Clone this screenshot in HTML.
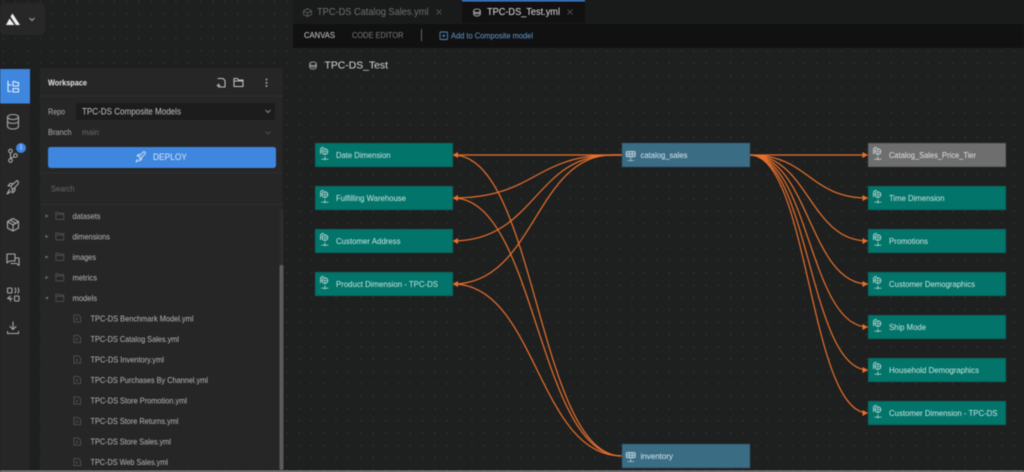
<!DOCTYPE html>
<html><head><meta charset="utf-8"><style>
html,body{margin:0;padding:0;background:#1e1f1f;width:1024px;height:472px;overflow:hidden}
svg{display:block;filter:blur(.5px)}
text{font-family:"Liberation Sans",sans-serif;dominant-baseline:central}
.n{font-size:8.6px;fill:#cfe5e1}
.f{font-size:8.3px;fill:#b8b8b8}
.i{fill:none;stroke:#c4c4c4;stroke-width:1.1;stroke-linecap:round;stroke-linejoin:round}
.e{fill:none;stroke:#e8702c;stroke-width:1.2}
</style></head><body>
<svg width="1024" height="472" viewBox="0 0 1024 472" xmlns="http://www.w3.org/2000/svg">
<defs>
<pattern id="d" x="2.7" y="1" width="12.33" height="12.33" patternUnits="userSpaceOnUse"><rect x="0" y="0" width="1.2" height="1.2" fill="#3a3c3c"/></pattern>
<symbol id="nd" viewBox="0 0 16 20" overflow="visible"><g fill="none" stroke="#d5e5e2" stroke-width="1"><path d="M3 10V4.5C3 3 4.5 2 7 1.5"/><circle cx="8.5" cy="7" r="3.6"/><path d="M5 7H12M8.5 3.5V10.5" stroke-width=".7"/><path d="M8.500 13V18M4 16.500H13" stroke-width=".8"/></g></symbol>
<symbol id="tb" viewBox="0 0 16 20" overflow="visible"><g fill="none" stroke="#d5e5ea" stroke-width="1"><rect x="1" y="2" width="12" height="7" rx="1.500" fill="#8fb0bd" fill-opacity=".4"/><path d="M5 2V9M9 2V9M1 5.500H13" stroke-width=".8"/><path d="M7 10V15M2.500 14H11.500" stroke-width=".8"/></g></symbol>
<symbol id="fd" viewBox="0 0 12 10" overflow="visible"><path d="M1 2.500V9H10.500V1.500H5L4 .5H1Z M1 3H10.500" fill="none" stroke="#565656" stroke-width=".9"/></symbol>
<symbol id="fl" viewBox="0 0 10 10" overflow="visible"><path d="M1 1H6L8.500 3.500V9H1Z M3.500 4L5 5.500 3.500 7" fill="none" stroke="#565656" stroke-width=".9"/></symbol>
<symbol id="cb" viewBox="0 0 12 10" overflow="visible"><g fill="none" stroke-width="1"><ellipse cx="6" cy="3" rx="4" ry="2.200"/><path d="M2 3V7C2 8.200 4 9.200 6 9.200S10 8.200 10 7V3M2 5.500C3 7 9 7 10 5.500"/></g></symbol>
</defs>
<rect width="1024" height="472" fill="#1e1f1f"/>
<rect width="1024" height="472" fill="url(#d)"/>

<!-- logo box -->
<rect x="0" y="3" width="45" height="32" rx="5" fill="#272727"/>
<path d="M12.500 13.500L20 25H16L10.500 16.500Z" fill="#f0f0f0"/>
<path d="M9.500 18.500L14.500 25H6Z" fill="#f0f0f0"/>
<path d="M29.500 18L32 20.500L34.500 18" fill="none" stroke="#aaa" stroke-width="1"/>

<!-- left rail -->
<rect x="0" y="69" width="30" height="401" fill="#262626"/>
<rect x="0" y="69" width="30" height="34.500" fill="#3f86de"/>
<path class="i" style="stroke:#e4eefa" d="M8 81V91.500H11M8 85H11"/>
<path class="i" style="stroke:#e4eefa" d="M13 81.500H15L16 82.500H18.500V86H13ZM13 88.500H18.500V92H13Z"/>
<g class="i" style="stroke:#a8a8a8"><ellipse cx="13" cy="117" rx="5.500" ry="2.500"/><path d="M7.500 117V126C7.500 128 10 129 13 129S18.500 128 18.500 126V117M7.500 121.500C9 124 17 124 18.500 121.500"/></g>
<g class="i" style="stroke:#a8a8a8"><circle cx="10.500" cy="151" r="1.800"/><circle cx="10.500" cy="160.500" r="1.800"/><circle cx="15.500" cy="155.500" r="1.800"/><path d="M10.500 153V158.500M14 156.800L10.500 158.500"/></g>
<circle cx="21" cy="148" r="5" fill="#3f86de"/>
<text x="21" y="148" text-anchor="middle" style="font-size:6px;fill:#e8f0fb">1</text>
<g class="i" style="stroke:#a8a8a8"><path d="M11 186L17 180.500L18.500 182L18 184L12.500 190ZM11 186L8 186L10 183.500L13 183.500M12.500 190V193L15 190.500V188M9.500 189.500L7 194L11 191.500"/></g>
<g class="i" style="stroke:#a8a8a8"><path d="M13 218.500L18.500 221.500V228L13 231L7.500 228V221.500ZM7.500 221.500L13 225L18.500 221.500M13 225V231M10 220L16 223.500"/></g>
<g class="i" style="stroke:#a8a8a8"><path d="M7 254H15V261H9.500L7 263ZM15.500 258H19V265.500L16.500 263.500H11"/></g>
<g class="i" style="stroke:#a8a8a8"><rect x="7.500" y="288" width="4.500" height="5" rx="1"/><path d="M15 288C16 289.500 16 291.500 15 293M18 288C19 289.500 19 291.500 18 293M7.500 298.500H12M10.500 296L7.500 298.500L10.500 299V301"/><rect x="14.500" y="296" width="4.500" height="5" rx="1"/></g>
<g class="i" style="stroke:#a8a8a8"><path d="M13 322V329M10 326.500L13 329.500L16 326.500M7.500 331.500V333.500H18.500V331.500"/></g>

<!-- workspace panel -->
<rect x="40" y="68" width="243" height="402" rx="2" fill="#262626"/>
<rect x="40" y="95.500" width="243" height="1.200" fill="#2e2e2e"/>
<rect x="40" y="172.500" width="243" height="1.200" fill="#2e2e2e"/>
<rect x="40" y="204" width="243" height="1.200" fill="#2e2e2e"/>
<text x="48" y="82.500" textLength="39" lengthAdjust="spacingAndGlyphs" style="font-size:8.500px;font-weight:700;fill:#e6e6e6">Workspace</text>
<g class="i" style="stroke:#bdbdbd"><path d="M218 78.500H223L225 80.500V87H219M217 85.500H220M218.500 84V87"/></g>
<g class="i" style="stroke:#bdbdbd"><path d="M234 78.500H237.500L238.500 80H243V86.500H234Z M234 81H243"/></g>
<circle cx="266.500" cy="79.500" r=".9" fill="#bdbdbd"/><circle cx="266.500" cy="82.800" r=".9" fill="#bdbdbd"/><circle cx="266.500" cy="86" r=".9" fill="#bdbdbd"/>

<text x="48" y="111.500" textLength="17" lengthAdjust="spacingAndGlyphs" style="font-size:8.300px;fill:#b0b0b0">Repo</text>
<rect x="76" y="103" width="199" height="17" rx="2" fill="#1c1c1c"/>
<text x="82" y="111.500" textLength="99" lengthAdjust="spacingAndGlyphs" style="font-size:8.800px;fill:#c4c4c4">TPC-DS Composite Models</text>
<path d="M265.500 110L268 112.500L270.500 110" fill="none" stroke="#8a8a8a" stroke-width="1"/>
<text x="48" y="132" textLength="23.500" lengthAdjust="spacingAndGlyphs" style="font-size:8.300px;fill:#b0b0b0">Branch</text>
<text x="82" y="132" textLength="17" lengthAdjust="spacingAndGlyphs" style="font-size:8.300px;fill:#6a6a6a">main</text>
<path d="M265.500 131.500L268 134L270.500 131.500" fill="none" stroke="#4e4e4e" stroke-width="1"/>
<rect x="48" y="147" width="228" height="21" rx="2.500" fill="#3f86de"/>
<text x="153" y="157.500" textLength="34" lengthAdjust="spacingAndGlyphs" style="font-size:9.500px;fill:#d9e6f7">DEPLOY</text>
<g class="i" style="stroke:#d2e1f5;stroke-width:.9"><path d="M139 156L144 151.500L145.500 152.500L145 154L140 159ZM139 156L137 156L139 154M140 159V161L142 158.500M137.500 159.500L136 162L138.500 160.500"/></g>
<text x="51" y="188.500" textLength="23.500" lengthAdjust="spacingAndGlyphs" style="font-size:8.300px;fill:#686868">Search</text>

<!-- tree -->
<g fill="#6e6e6e">
<path d="M45.500 214.500L48.500 216L45.500 217.500Z"/><path d="M45.500 235L48.500 236.500L45.500 238Z"/><path d="M45.500 255.500L48.500 257L45.500 258.500Z"/><path d="M45.500 276L48.500 277.500L45.500 279Z"/><path d="M45.500 297L48.500 297L47 300Z"/>
</g>
<use href="#fd" x="55" y="211.500" width="10" height="9"/>
<use href="#fd" x="55" y="232" width="10" height="9"/>
<use href="#fd" x="55" y="252.500" width="10" height="9"/>
<use href="#fd" x="55" y="273" width="10" height="9"/>
<use href="#fd" x="55" y="293.500" width="10" height="9"/>
<text class="f" x="72.500" y="216" textLength="28" lengthAdjust="spacingAndGlyphs">datasets</text>
<text class="f" x="72.500" y="236.500" textLength="37.500" lengthAdjust="spacingAndGlyphs">dimensions</text>
<text class="f" x="72.500" y="257" textLength="23.500" lengthAdjust="spacingAndGlyphs">images</text>
<text class="f" x="72.500" y="277.500" textLength="24.500" lengthAdjust="spacingAndGlyphs">metrics</text>
<text class="f" x="72.500" y="298" textLength="24.500" lengthAdjust="spacingAndGlyphs">models</text>
<use href="#fl" x="73" y="314" width="9" height="9"/>
<use href="#fl" x="73" y="334.500" width="9" height="9"/>
<use href="#fl" x="73" y="355" width="9" height="9"/>
<use href="#fl" x="73" y="375.500" width="9" height="9"/>
<use href="#fl" x="73" y="396" width="9" height="9"/>
<use href="#fl" x="73" y="416.500" width="9" height="9"/>
<use href="#fl" x="73" y="437" width="9" height="9"/>
<use href="#fl" x="73" y="457.500" width="9" height="9"/>
<text class="f" x="90.500" y="318.500" textLength="103" lengthAdjust="spacingAndGlyphs">TPC-DS Benchmark Model.yml</text>
<text class="f" x="90.500" y="339" textLength="88.500" lengthAdjust="spacingAndGlyphs">TPC-DS Catalog Sales.yml</text>
<text class="f" x="90.500" y="359.500" textLength="73.500" lengthAdjust="spacingAndGlyphs">TPC-DS Inventory.yml</text>
<text class="f" x="90.500" y="380" textLength="117.500" lengthAdjust="spacingAndGlyphs">TPC-DS Purchases By Channel.yml</text>
<text class="f" x="90.500" y="400.500" textLength="96.500" lengthAdjust="spacingAndGlyphs">TPC-DS Store Promotion.yml</text>
<text class="f" x="90.500" y="421" textLength="88" lengthAdjust="spacingAndGlyphs">TPC-DS Store Returns.yml</text>
<text class="f" x="90.500" y="441.500" textLength="80.500" lengthAdjust="spacingAndGlyphs">TPC-DS Store Sales.yml</text>
<text class="f" x="90.500" y="462" textLength="77.500" lengthAdjust="spacingAndGlyphs">TPC-DS Web Sales.yml</text>
<rect x="279.500" y="209" width="4" height="261" rx="1.500" fill="#2c2c2c"/>
<rect x="279.500" y="265" width="4" height="205" rx="1.500" fill="#5a5a5a"/>

<!-- tabs and toolbar -->
<rect x="293" y="0" width="731" height="24" fill="#191a1a"/>
<rect x="462" y="1" width="123" height="22" fill="#111"/>
<rect x="462" y="0" width="123" height="1.500" fill="#3f86de"/>
<rect x="293" y="24" width="731" height="24" fill="#111"/>
<g class="i" style="stroke:#5e5e5e;stroke-width:.9"><path d="M307.500 8.500L311.500 11V14.500L307.500 16.500L303.500 14.500V11ZM303.500 11L307.500 13L311.500 11M307.500 13V16.500"/></g>
<text x="317" y="12" textLength="111.500" lengthAdjust="spacingAndGlyphs" style="font-size:10.500px;fill:#707070">TPC-DS Catalog Sales.yml</text>
<path d="M436.500 9.500L441.500 14.500M441.500 9.500L436.500 14.500" stroke="#4a4a4a" stroke-width="1"/>
<use href="#cb" x="472" y="8" width="10" height="9" stroke="#bbb"/>
<text x="487" y="12" textLength="73" lengthAdjust="spacingAndGlyphs" style="font-size:10.500px;fill:#e2e2e2">TPC-DS_Test.yml</text>
<path d="M567.500 9.500L572.500 14.500M572.500 9.500L567.500 14.500" stroke="#4a4a4a" stroke-width="1"/>
<text x="304" y="35.500" textLength="31" lengthAdjust="spacingAndGlyphs" style="font-size:8.200px;fill:#d4d4d4">CANVAS</text>
<text x="352" y="35.500" textLength="51.500" lengthAdjust="spacingAndGlyphs" style="font-size:8.200px;fill:#7c7c7c">CODE EDITOR</text>
<rect x="421" y="29" width="1" height="12" fill="#666"/>
<rect x="440" y="32" width="7.500" height="7.500" rx="1" fill="none" stroke="#4f86b8" stroke-width=".9"/>
<path d="M442.200 35.700H445.300M443.700 34.200V37.300" stroke="#4f86b8" stroke-width=".8"/>
<text x="451" y="35.500" textLength="82" lengthAdjust="spacingAndGlyphs" style="font-size:8.300px;fill:#659bd0">Add to Composite model</text>
<use href="#cb" x="308" y="61" width="10" height="9" stroke="#b0b0b0"/>
<text x="324.500" y="65.500" textLength="63.500" lengthAdjust="spacingAndGlyphs" style="font-size:10.500px;fill:#dadada">TPC-DS_Test</text>

<!-- edges -->
<g class="e">
<path d="M622 155H453"/>
<path d="M622 155H612C535 155 535 198 453 198"/>
<path d="M622 155H612C535 155 535 241 453 241"/>
<path d="M622 155H612C535 155 535 284 453 284"/>
<path d="M622 456C537 456 537 155 453 155"/>
<path d="M622 456C537 456 537 198 453 198"/>
<path d="M622 456C537 456 537 284 453 284"/>
<path d="M750 155H868"/>
<path d="M750 155C809 155 809 198 868 198"/>
<path d="M750 155C809 155 809 241 868 241"/>
<path d="M750 155C809 155 809 284 868 284"/>
<path d="M750 155C809 155 809 327 868 327"/>
<path d="M750 155C809 155 809 370 868 370"/>
<path d="M750 155C809 155 809 413 868 413"/>
</g>
<g fill="#e8702c">
<path d="M452.500 155L458 152V158Z"/><path d="M452.500 198L458 195V201Z"/><path d="M452.500 241L458 238V244Z"/><path d="M452.500 284L458 281V287Z"/>
<path d="M868 155L862.500 152V158Z"/><path d="M868 198L862.500 195V201Z"/><path d="M868 241L862.500 238V244Z"/><path d="M868 284L862.500 281V287Z"/><path d="M868 327L862.500 324V330Z"/><path d="M868 370L862.500 367V373Z"/><path d="M868 413L862.500 410V416Z"/>
</g>

<!-- nodes -->
<g fill="#02746a" stroke="#1a3f3b" stroke-width=".6">
<rect x="315" y="143" width="138" height="24"/><rect x="315" y="186" width="138" height="24"/><rect x="315" y="229" width="138" height="24"/><rect x="315" y="272" width="138" height="24"/>
<rect x="868" y="186" width="138" height="24"/><rect x="868" y="229" width="138" height="24"/><rect x="868" y="272" width="138" height="24"/><rect x="868" y="315" width="138" height="24"/><rect x="868" y="358" width="138" height="24"/><rect x="868" y="401" width="138" height="24"/>
</g>
<rect x="868" y="143" width="138" height="24" fill="#6e6e6e" stroke="#3a3a3a" stroke-width=".6"/>
<g fill="#3a6c84" stroke="#27495a" stroke-width=".6"><rect x="622" y="143" width="128" height="24"/><rect x="622" y="444" width="128" height="24"/></g>
<use href="#nd" x="318" y="146" width="13" height="16"/><use href="#nd" x="318" y="189" width="13" height="16"/><use href="#nd" x="318" y="232" width="13" height="16"/><use href="#nd" x="318" y="275" width="13" height="16"/>
<use href="#nd" x="871" y="146" width="13" height="16"/><use href="#nd" x="871" y="189" width="13" height="16"/><use href="#nd" x="871" y="232" width="13" height="16"/><use href="#nd" x="871" y="275" width="13" height="16"/><use href="#nd" x="871" y="318" width="13" height="16"/><use href="#nd" x="871" y="361" width="13" height="16"/><use href="#nd" x="871" y="404" width="13" height="16"/>
<use href="#tb" x="625.500" y="150" width="12" height="15"/><use href="#tb" x="625.500" y="451" width="12" height="15"/>
<text class="n" x="336" y="155" textLength="54.500" lengthAdjust="spacingAndGlyphs">Date Dimension</text>
<text class="n" x="336" y="198" textLength="70" lengthAdjust="spacingAndGlyphs">Fulfilling Warehouse</text>
<text class="n" x="336" y="241" textLength="64.500" lengthAdjust="spacingAndGlyphs">Customer Address</text>
<text class="n" x="336" y="284" textLength="102" lengthAdjust="spacingAndGlyphs">Product Dimension - TPC-DS</text>
<text class="n" x="640.500" y="155" textLength="47" lengthAdjust="spacingAndGlyphs" style="fill:#dbe9ee">catalog_sales</text>
<text class="n" x="640.500" y="456" textLength="32.500" lengthAdjust="spacingAndGlyphs" style="fill:#dbe9ee">inventory</text>
<text class="n" x="889" y="155" textLength="87" lengthAdjust="spacingAndGlyphs" style="fill:#e2e2e2">Catalog_Sales_Price_Tier</text>
<text class="n" x="889" y="198" textLength="55.500" lengthAdjust="spacingAndGlyphs">Time Dimension</text>
<text class="n" x="889" y="241" textLength="39" lengthAdjust="spacingAndGlyphs">Promotions</text>
<text class="n" x="889" y="284" textLength="86" lengthAdjust="spacingAndGlyphs">Customer Demographics</text>
<text class="n" x="889" y="327" textLength="37" lengthAdjust="spacingAndGlyphs">Ship Mode</text>
<text class="n" x="889" y="370" textLength="90" lengthAdjust="spacingAndGlyphs">Household Demographics</text>
<text class="n" x="889" y="413" textLength="108.500" lengthAdjust="spacingAndGlyphs">Customer Dimension - TPC-DS</text>
<rect x="0" y="470.500" width="1024" height="1.500" fill="#8a8a8a"/>
</svg>
</body></html>
